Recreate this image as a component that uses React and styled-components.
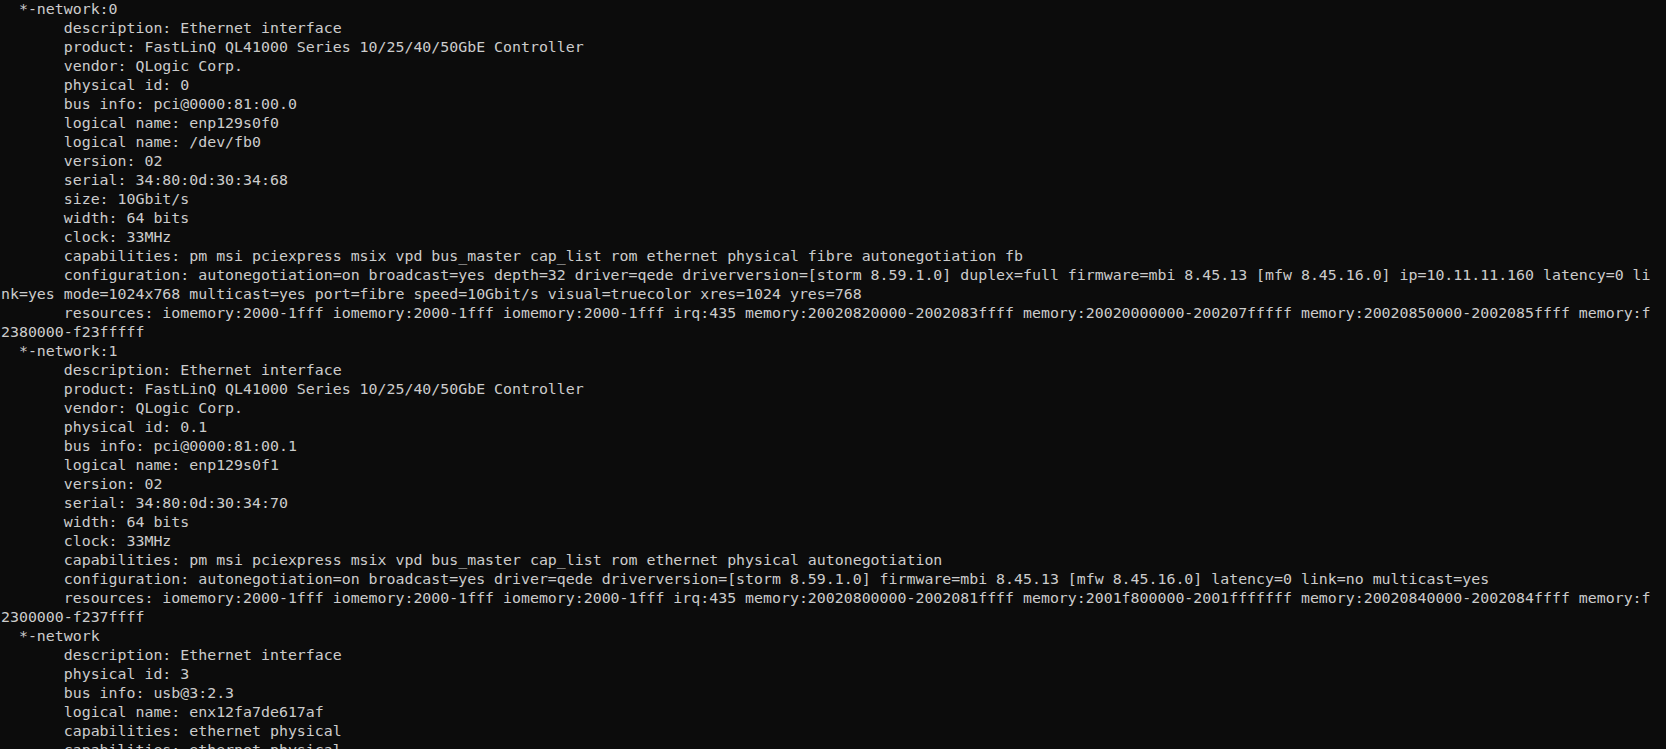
import React from "react";
import styled, { createGlobalStyle } from "styled-components";

const GlobalStyle = createGlobalStyle`
  html, body {
    margin: 0;
    padding: 0;
    background: #0c0c0c;
    overflow: hidden;
  }
`;

const I = "       ";

const lines = [
  "  *-network:0",
  I + "description: Ethernet interface",
  I + "product: FastLinQ QL41000 Series 10/25/40/50GbE Controller",
  I + "vendor: QLogic Corp.",
  I + "physical id: 0",
  I + "bus info: pci@0000:81:00.0",
  I + "logical name: enp129s0f0",
  I + "logical name: /dev/fb0",
  I + "version: 02",
  I + "serial: 34:80:0d:30:34:68",
  I + "size: 10Gbit/s",
  I + "width: 64 bits",
  I + "clock: 33MHz",
  I +
    "capabilities: pm msi pciexpress msix vpd bus_master cap_list rom ethernet physical fibre autonegotiation fb",
  I +
    "configuration: autonegotiation=on broadcast=yes depth=32 driver=qede driverversion=[storm 8.59.1.0] duplex=full firmware=mbi 8.45.13 [mfw 8.45.16.0] ip=10.11.11.160 latency=0 li",
  "nk=yes mode=1024x768 multicast=yes port=fibre speed=10Gbit/s visual=truecolor xres=1024 yres=768",
  I +
    "resources: iomemory:2000-1fff iomemory:2000-1fff iomemory:2000-1fff irq:435 memory:20020820000-2002083ffff memory:20020000000-200207fffff memory:20020850000-2002085ffff memory:f",
  "2380000-f23fffff",
  "  *-network:1",
  I + "description: Ethernet interface",
  I + "product: FastLinQ QL41000 Series 10/25/40/50GbE Controller",
  I + "vendor: QLogic Corp.",
  I + "physical id: 0.1",
  I + "bus info: pci@0000:81:00.1",
  I + "logical name: enp129s0f1",
  I + "version: 02",
  I + "serial: 34:80:0d:30:34:70",
  I + "width: 64 bits",
  I + "clock: 33MHz",
  I +
    "capabilities: pm msi pciexpress msix vpd bus_master cap_list rom ethernet physical autonegotiation",
  I +
    "configuration: autonegotiation=on broadcast=yes driver=qede driverversion=[storm 8.59.1.0] firmware=mbi 8.45.13 [mfw 8.45.16.0] latency=0 link=no multicast=yes",
  I +
    "resources: iomemory:2000-1fff iomemory:2000-1fff iomemory:2000-1fff irq:435 memory:20020800000-2002081ffff memory:2001f800000-2001fffffff memory:20020840000-2002084ffff memory:f",
  "2300000-f237ffff",
  "  *-network",
  I + "description: Ethernet interface",
  I + "physical id: 3",
  I + "bus info: usb@3:2.3",
  I + "logical name: enx12fa7de617af",
  I + "capabilities: ethernet physical",
  I + "capabilities: ethernet physical",
];

export default function App() {
  return (
    <>
      <GlobalStyle />
      <Terminal>
        {lines.map((text, i) => (
          <Line key={i}>{text}</Line>
        ))}
      </Terminal>
    </>
  );
}

const Terminal = styled.div`
  width: 1666px;
  height: 749px;
  box-sizing: border-box;
  padding: 0 0 0 1px;
  background: #0c0c0c;
  color: #cccccc;
  font-family: "DejaVu Sans Mono", "Liberation Mono", monospace;
  font-size: 14.9px;
  overflow: hidden;
  display: flex;
  flex-direction: column;
`;

const Line = styled.div`
  height: 19px;
  line-height: 19px;
  white-space: pre;
  flex-shrink: 0;
`;
